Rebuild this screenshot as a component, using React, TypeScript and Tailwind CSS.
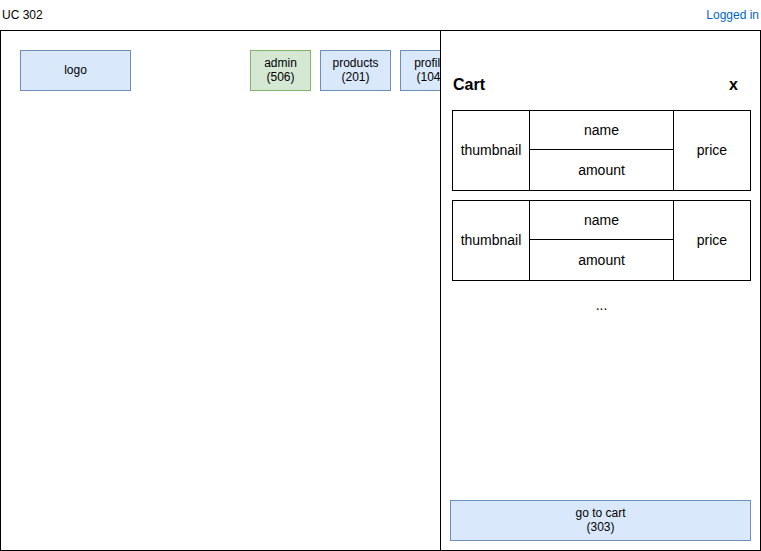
function NavBox({ label, sub, green }: any) {
	const tone = green
		? 'bg-[#d5e8d4] border-[#82b366]'
		: 'bg-[#dae8fc] border-[#6c8ebf]';
	return (
		<div
			className={
				'shrink-0 h-[41px] border flex flex-col items-center justify-center pb-[1px] text-[12px] leading-[14px] ' +
				tone
			}
		>
			<span>{label}</span>
			{sub && <span>{sub}</span>}
		</div>
	);
}

function CartItem() {
	return (
		<div className="flex h-[81px] border border-black text-[14px]">
			<div className="w-[77px] border-r border-black flex items-center justify-center">
				thumbnail
			</div>
			<div className="flex-1 flex flex-col">
				<div className="h-[39px] border-b border-black flex items-center justify-center">
					name
				</div>
				<div className="flex-1 flex items-center justify-center">amount</div>
			</div>
			<div className="w-[77px] border-l border-black flex items-center justify-center">
				price
			</div>
		</div>
	);
}

export default function App() {
	return (
		<div className="w-[761px] h-[551px] bg-white text-black font-['Liberation_Sans',Arial,sans-serif]">
			<div className="h-[30px] flex items-center justify-between pl-[2px] pr-[2px] text-[12px]">
				<span>UC 302</span>
				<span className="text-[#0066cc]">Logged in</span>
			</div>
			<div className="flex h-[521px] border border-black">
				<div className="w-[439px] overflow-hidden flex items-start pt-[19px] pl-[19px]">
					<div className="w-[111px] shrink-0">
						<NavBox label="logo" />
					</div>
					<div className="w-[61px] ml-[119px] shrink-0">
						<NavBox label="admin" sub="(506)" green />
					</div>
					<div className="w-[71px] ml-[9px] shrink-0">
						<NavBox label="products" sub="(201)" />
					</div>
					<div className="w-[61px] ml-[9px] shrink-0">
						<NavBox label="profile" sub="(104)" />
					</div>
				</div>
				<div className="flex-1 border-l border-black flex flex-col">
					<div className="flex items-center justify-between h-[20px] mt-[44px] pl-[12px] pr-[22px] font-bold text-[16px]">
						<span>Cart</span>
						<span>x</span>
					</div>
					<div className="flex flex-col gap-[9px] mt-[15px] ml-[11px] mr-[9px]">
						<CartItem />
						<CartItem />
					</div>
					<div className="text-center text-[14px] mt-[17px] ml-[2px] leading-none">...</div>
					<div className="mt-auto mx-[9px] mb-[9px] h-[41px] border border-[#6c8ebf] bg-[#dae8fc] flex flex-col items-center justify-center pb-[1px] text-[12px] leading-[14px]">
						<span>go to cart</span>
						<span>(303)</span>
					</div>
				</div>
			</div>
		</div>
	);
}
